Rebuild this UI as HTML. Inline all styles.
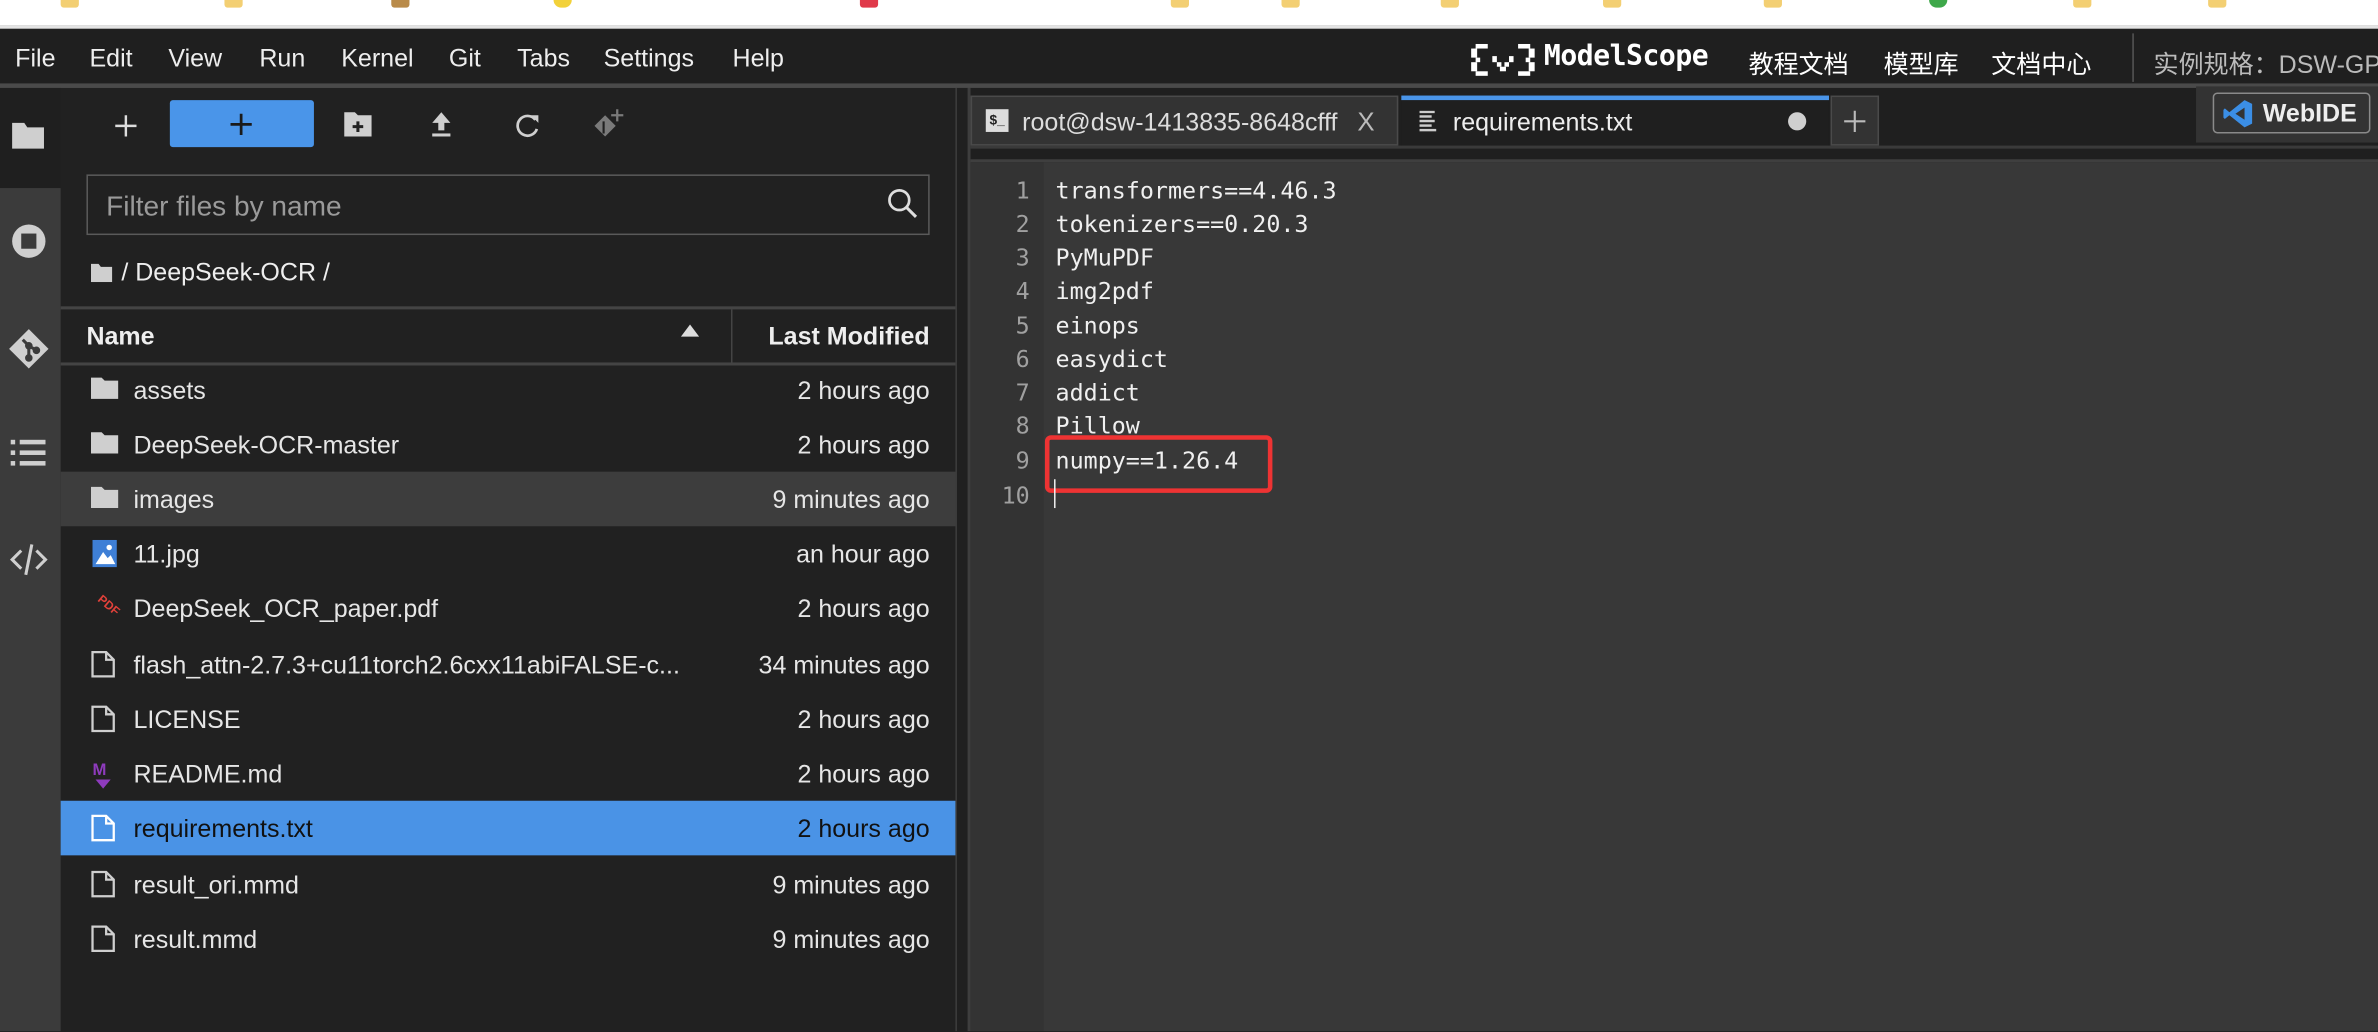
<!DOCTYPE html>
<html><head><meta charset="utf-8"><style>
html,body{margin:0;padding:0;width:2378px;height:1032px;overflow:hidden;background:#212121}
.s{position:absolute;left:0;top:0;width:1568px;height:680px;transform:scale(1.51658);transform-origin:0 0;font-family:"Liberation Sans","Noto Sans CJK SC",sans-serif;color:#e6e6e6;overflow:hidden;background:#212121}
.a{position:absolute}
.menu span{position:absolute;top:30px;font-size:16.5px;color:#eee}
.row{position:absolute;left:40px;width:590px;height:36px;font-size:16.5px}
.row .n{position:absolute;left:48px;top:10px;color:#e6e6e6;white-space:nowrap}
.row .t{position:absolute;right:17px;top:10px;color:#e6e6e6}
.row svg{position:absolute;left:20px;top:9px}
.code{position:absolute;left:696px;font-family:"DejaVu Sans Mono","Liberation Mono",monospace;font-size:15.4px;color:#f0f0f0}
.ln{position:absolute;left:640px;width:39px;text-align:right;font-family:"DejaVu Sans Mono","Liberation Mono",monospace;font-size:15.4px;color:#a0a0a0}
.bm{position:absolute;top:0;width:12px;height:5px;background:#f3cf73;border-radius:0 0 2px 2px}
</style></head><body><div class="s">
<div class="a" style="left:0;top:0;width:1568px;height:17px;background:#fff"></div>
<div class="a" style="left:0;top:17px;width:1568px;height:2px;background:#e3e3e3"></div>
<div class="bm" style="left:40px"></div><div class="bm" style="left:148px"></div><div class="bm" style="left:258px;background:#b98b4a"></div><div class="bm" style="left:365px;background:#f2d13a;border-radius:0 0 6px 6px"></div><div class="bm" style="left:567px;background:#e03a4a"></div><div class="bm" style="left:772px"></div><div class="bm" style="left:845px"></div><div class="bm" style="left:950px"></div><div class="bm" style="left:1057px"></div><div class="bm" style="left:1163px"></div><div class="bm" style="left:1272px;background:#3ea84a;border-radius:0 0 6px 6px"></div><div class="bm" style="left:1367px"></div><div class="bm" style="left:1456px"></div>
<div class="a" style="left:0;top:19px;width:1568px;height:37px;background:#1f1f1f"></div>
<div class="a" style="left:0;top:55px;width:1568px;height:3px;background:#4a4a4a"></div>
<div class="menu"><span style="left:10px">File</span><span style="left:59px">Edit</span><span style="left:111px">View</span><span style="left:171px">Run</span><span style="left:225px">Kernel</span><span style="left:296px">Git</span><span style="left:341px">Tabs</span><span style="left:398px">Settings</span><span style="left:483px">Help</span></div>
<svg class="a" style="left:970px;top:27px" width="42" height="24" viewBox="0 0 42 24"><g fill="#fff"><rect x="3" y="2" width="8" height="3"/><rect x="0" y="5" width="4" height="6"/><rect x="3" y="11" width="3" height="3"/><rect x="0" y="14" width="4" height="6"/><rect x="3" y="20" width="8" height="3"/><rect x="31" y="2" width="8" height="3"/><rect x="38" y="5" width="4" height="6"/><rect x="36" y="11" width="3" height="3"/><rect x="38" y="14" width="4" height="6"/><rect x="31" y="20" width="8" height="3"/><rect x="14" y="10" width="3" height="4"/><rect x="25" y="10" width="3" height="4"/><rect x="17" y="14" width="3" height="3"/><rect x="22" y="14" width="3" height="3"/><rect x="19" y="17" width="4" height="3"/></g></svg>
<div class="a" style="left:1018px;top:27px;font-family:'DejaVu Sans Mono',monospace;font-weight:bold;font-size:18.5px;color:#fff;letter-spacing:-0.3px">ModelScope</div>
<div class="a" style="left:1153px;top:29px;font-size:16.5px;color:#fff">教程文档</div>
<div class="a" style="left:1242px;top:29px;font-size:16.5px;color:#fff">模型库</div>
<div class="a" style="left:1313px;top:29px;font-size:16.5px;color:#fff">文档中心</div>
<div class="a" style="left:1406px;top:22px;width:1px;height:32px;background:#555"></div>
<div class="a" style="left:1420px;top:29px;font-size:16.5px;color:#bbb;white-space:nowrap">实例规格：DSW-GPU</div>
<div class="a" style="left:0;top:58px;width:40px;height:66px;background:#1f1f1f"></div>
<div class="a" style="left:0;top:124px;width:40px;height:556px;background:#3b3b3b"></div>
<svg class="a" style="left:7px;top:79px" width="24" height="20" viewBox="0 0 24 20"><path d="M1 2h8l2 3h11v14H1z" fill="#cfcfcf"/></svg>
<svg class="a" style="left:7px;top:147px" width="24" height="24" viewBox="0 0 24 24"><circle cx="12" cy="12" r="11" fill="#cfcfcf"/><rect x="7" y="7" width="10" height="10" fill="#3b3b3b"/></svg>
<svg class="a" style="left:5px;top:216px" width="28" height="28" viewBox="0 0 28 28"><path d="M14 1L27 14 14 27 1 14z" fill="#cfcfcf"/><g stroke="#3b3b3b" stroke-width="2" fill="#3b3b3b"><line x1="10" y1="8" x2="14" y2="12"/><line x1="14" y1="12" x2="14" y2="20"/><line x1="14" y1="12" x2="19" y2="15"/><circle cx="14" cy="20" r="1.5"/><circle cx="19" cy="15" r="1.5"/><circle cx="14" cy="12" r="1.5"/></g></svg>
<svg class="a" style="left:7px;top:288px" width="24" height="20" viewBox="0 0 24 20"><g fill="#cfcfcf"><rect x="0" y="2" width="3" height="3"/><rect x="6" y="2" width="17" height="3"/><rect x="0" y="9" width="3" height="3"/><rect x="6" y="9" width="17" height="3"/><rect x="0" y="16" width="3" height="3"/><rect x="6" y="16" width="17" height="3"/></g></svg>
<svg class="a" style="left:6px;top:357px" width="26" height="24" viewBox="0 0 26 24"><g stroke="#cfcfcf" stroke-width="2" fill="none"><path d="M8 6L2 12l6 6"/><path d="M18 6l6 6-6 6"/><path d="M15 2L11 22"/></g></svg>
<svg class="a" style="left:75px;top:75px" width="16" height="16" viewBox="0 0 16 16"><path d="M8 1v14M1 8h14" stroke="#ddd" stroke-width="1.6"/></svg>
<div class="a" style="left:112px;top:66px;width:95px;height:31px;background:#4a95e9;border-radius:2px"></div>
<svg class="a" style="left:151px;top:74px" width="16" height="16" viewBox="0 0 16 16"><path d="M8 1v14M1 8h14" stroke="#1a1a1a" stroke-width="1.8"/></svg>
<svg class="a" style="left:226px;top:73px" width="20" height="18" viewBox="0 0 20 18"><path d="M1 1h7l2 2h9v14H1z" fill="#cfcfcf"/><path d="M10 7v7M6.5 10.5h7" stroke="#222" stroke-width="2"/></svg>
<svg class="a" style="left:283px;top:73px" width="16" height="18" viewBox="0 0 16 18"><path d="M8 1L2 8h4v5h4V8h4z" fill="#cfcfcf"/><rect x="2" y="15" width="12" height="2" fill="#cfcfcf"/></svg>
<svg class="a" style="left:339px;top:74px" width="18" height="18" viewBox="0 0 18 18"><path d="M14 5A6.5 6.5 0 1 0 15 11" stroke="#cfcfcf" stroke-width="1.8" fill="none"/><path d="M11 2l5 0 0 5z" fill="#cfcfcf"/></svg>
<svg class="a" style="left:390px;top:70px" width="24" height="24" viewBox="0 0 24 24"><path d="M9 6l7 7-7 7-7-7z" fill="#7a7a7a"/><path d="M17 2v8M13 6h8" stroke="#7a7a7a" stroke-width="1.5"/><path d="M8 10v8" stroke="#212121" stroke-width="1.4"/></svg>
<div class="a" style="left:57px;top:115px;width:554px;height:38px;border:1px solid #5a5a5a"></div>
<div class="a" style="left:70px;top:125px;font-size:18.5px;color:#9a9a9a">Filter files by name</div>
<svg class="a" style="left:584px;top:123px" width="22" height="22" viewBox="0 0 22 22"><circle cx="9" cy="9" r="6.5" stroke="#ddd" stroke-width="1.8" fill="none"/><path d="M14 14l6 6" stroke="#ddd" stroke-width="2"/></svg>
<svg class="a" style="left:60px;top:173px" width="14" height="13" viewBox="0 0 14 13"><path d="M0 1h5l1.5 2H14v10H0z" fill="#cfcfcf"/></svg>
<div class="a" style="left:80px;top:171px;font-size:16.5px;color:#eee">/ DeepSeek-OCR /</div>
<div class="a" style="left:40px;top:202px;width:590px;height:2px;background:#444"></div>
<div class="a" style="left:57px;top:213px;font-size:16.5px;font-weight:bold;color:#eee">Name</div>
<svg class="a" style="left:448px;top:213px" width="14" height="10" viewBox="0 0 14 10"><path d="M7 1l6 8H1z" fill="#ddd"/></svg>
<div class="a" style="left:482px;top:204px;width:1px;height:36px;background:#444"></div>
<div class="a" style="right:955px;top:213px;font-size:16.5px;font-weight:bold;color:#eee">Last Modified</div>
<div class="a" style="left:40px;top:239px;width:590px;height:2px;background:#444"></div>
<div class="row" style="top:239px"><svg width="18" height="16" viewBox="0 0 18 16"><path d="M0 1h7l2 2h9v12H0z" fill="#cfcfcf"/></svg><span class="n">assets</span><span class="t">2 hours ago</span></div>
<div class="row" style="top:275px"><svg width="18" height="16" viewBox="0 0 18 16"><path d="M0 1h7l2 2h9v12H0z" fill="#cfcfcf"/></svg><span class="n">DeepSeek-OCR-master</span><span class="t">2 hours ago</span></div>
<div class="row" style="top:311px;background:#3d3d3d"><svg width="18" height="16" viewBox="0 0 18 16"><path d="M0 1h7l2 2h9v12H0z" fill="#cfcfcf"/></svg><span class="n">images</span><span class="t">9 minutes ago</span></div>
<div class="row" style="top:347px"><svg width="18" height="18" viewBox="0 0 18 18"><rect x="1" y="0" width="16" height="18" fill="#3e7fd6"/><path d="M3 16l5-8 3 4 2-2 3 6z" fill="#fff"/><circle cx="12" cy="5" r="1.8" fill="#fff"/></svg><span class="n">11.jpg</span><span class="t">an hour ago</span></div>
<div class="row" style="top:383px"><svg width="20" height="20" viewBox="0 0 20 20"><text x="1" y="8" transform="rotate(40 8 10)" font-family="Liberation Sans" font-size="8" font-weight="bold" fill="#e0413a">PDF</text></svg><span class="n">DeepSeek_OCR_paper.pdf</span><span class="t">2 hours ago</span></div>
<div class="row" style="top:420px"><svg width="16" height="18" viewBox="0 0 16 18"><path d="M1 1h9l5 5v11H1z M10 1v5h5" stroke="#cfcfcf" stroke-width="1.5" fill="none"/></svg><span class="n">flash_attn-2.7.3+cu11torch2.6cxx11abiFALSE-c...</span><span class="t">34 minutes ago</span></div>
<div class="row" style="top:456px"><svg width="16" height="18" viewBox="0 0 16 18"><path d="M1 1h9l5 5v11H1z M10 1v5h5" stroke="#cfcfcf" stroke-width="1.5" fill="none"/></svg><span class="n">LICENSE</span><span class="t">2 hours ago</span></div>
<div class="row" style="top:492px"><svg width="16" height="20" viewBox="0 0 16 20"><text x="1" y="10" font-family="Liberation Sans" font-size="11" font-weight="bold" fill="#8e3bbd">M</text><path d="M3 13h10l-5 6z" fill="#8e3bbd"/></svg><span class="n">README.md</span><span class="t">2 hours ago</span></div>
<div class="row" style="top:528px;background:#4a93e6"><svg width="16" height="18" viewBox="0 0 16 18"><path d="M1 1h9l5 5v11H1z M10 1v5h5" stroke="#fff" stroke-width="1.5" fill="none"/></svg><span class="n" style="color:#111">requirements.txt</span><span class="t" style="color:#111">2 hours ago</span></div>
<div class="row" style="top:565px"><svg width="16" height="18" viewBox="0 0 16 18"><path d="M1 1h9l5 5v11H1z M10 1v5h5" stroke="#cfcfcf" stroke-width="1.5" fill="none"/></svg><span class="n">result_ori.mmd</span><span class="t">9 minutes ago</span></div>
<div class="row" style="top:601px"><svg width="16" height="18" viewBox="0 0 16 18"><path d="M1 1h9l5 5v11H1z M10 1v5h5" stroke="#cfcfcf" stroke-width="1.5" fill="none"/></svg><span class="n">result.mmd</span><span class="t">9 minutes ago</span></div>
<div class="a" style="left:630px;top:58px;width:1px;height:622px;background:#3e3e3e"></div>
<div class="a" style="left:631px;top:58px;width:7px;height:622px;background:#202020"></div>
<div class="a" style="left:638px;top:58px;width:2px;height:622px;background:#3e3e3e"></div>
<div class="a" style="left:640px;top:58px;width:928px;height:48px;background:#1f1f1f"></div>
<div class="a" style="left:640px;top:63px;width:282px;height:33px;background:#333;border:1px solid #4a4a4a;box-sizing:border-box"></div>
<div class="a" style="left:650px;top:72px;width:15px;height:15px;background:#ddd;font-size:9px;color:#222;font-weight:bold;line-height:15px;text-align:center">$_</div>
<div class="a" style="left:674px;top:72px;font-size:16.5px;color:#ddd;white-space:nowrap">root@dsw-1413835-8648cfff</div>
<div class="a" style="left:895px;top:71px;font-size:17px;color:#bbb">X</div>
<div class="a" style="left:924px;top:63px;width:282px;height:35px;background:#1f1f1f;border-top:3px solid #4a95e9;box-sizing:border-box"></div>
<svg class="a" style="left:936px;top:73px" width="12" height="14" viewBox="0 0 12 14"><g fill="#ccc"><rect y="0" width="10" height="1.6"/><rect y="3" width="8" height="1.6"/><rect y="6" width="10" height="1.6"/><rect y="9" width="8" height="1.6"/><rect y="12" width="11" height="1.6"/></g></svg>
<div class="a" style="left:958px;top:72px;font-size:16.5px;color:#eee">requirements.txt</div>
<div class="a" style="left:1179px;top:74px;width:12px;height:12px;border-radius:50%;background:#cfcfcf"></div>
<div class="a" style="left:1207px;top:63px;width:32px;height:33px;background:#333;border:1px solid #4a4a4a;box-sizing:border-box"></div>
<svg class="a" style="left:1215px;top:72px" width="16" height="16" viewBox="0 0 16 16"><path d="M8 1v14M1 8h14" stroke="#bbb" stroke-width="1.4"/></svg>
<div class="a" style="left:640px;top:96px;width:928px;height:2px;background:#3a3a3a"></div>
<div class="a" style="left:1448px;top:57px;width:120px;height:37px;background:#333"></div>
<div class="a" style="left:1459px;top:61px;width:104px;height:27px;border:1px solid #8a8a8a;border-radius:3px;box-sizing:border-box"></div>
<svg class="a" style="left:1466px;top:65px" width="20" height="20" viewBox="0 0 20 20"><path d="M14 1l5 2.5v13L14 19 4 11l-3 2.5-1-1V7.5l1-1L4 9z M14 6L8 10l6 4z" fill="#3b8ee5" fill-rule="evenodd"/></svg>
<div class="a" style="left:1492px;top:66px;font-size:16.5px;font-weight:bold;color:#eee">WebIDE</div>
<div class="a" style="left:640px;top:105px;width:928px;height:2px;background:#3f3f3f"></div>
<div class="a" style="left:640px;top:107px;width:48px;height:573px;background:#333"></div>
<div class="a" style="left:688px;top:107px;width:880px;height:573px;background:#383838"></div>
<div class="ln" style="top:117px">1</div><div class="code" style="top:117px">transformers==4.46.3</div>
<div class="ln" style="top:139px">2</div><div class="code" style="top:139px">tokenizers==0.20.3</div>
<div class="ln" style="top:161px">3</div><div class="code" style="top:161px">PyMuPDF</div>
<div class="ln" style="top:183px">4</div><div class="code" style="top:183px">img2pdf</div>
<div class="ln" style="top:206px">5</div><div class="code" style="top:206px">einops</div>
<div class="ln" style="top:228px">6</div><div class="code" style="top:228px">easydict</div>
<div class="ln" style="top:250px">7</div><div class="code" style="top:250px">addict</div>
<div class="ln" style="top:272px">8</div><div class="code" style="top:272px">Pillow</div>
<div class="ln" style="top:295px">9</div><div class="code" style="top:295px">numpy==1.26.4</div>
<div class="ln" style="top:318px">10</div>
<div class="a" style="left:689px;top:287px;width:150px;height:38px;border:3px solid #ee3333;border-radius:4px;box-sizing:border-box"></div>
<div class="a" style="left:695px;top:316px;width:1px;height:19px;background:#eee"></div>
</div></body></html>
